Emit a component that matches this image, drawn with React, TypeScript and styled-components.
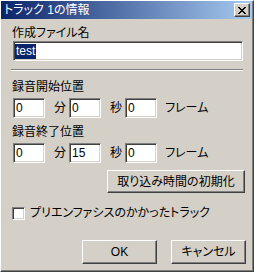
import styled, { createGlobalStyle } from 'styled-components';

const GlobalStyle = createGlobalStyle`
  html, body {
    margin: 0;
    padding: 0;
    background: #d4d0c8;
  }
  body {
    font-family: 'Liberation Sans', 'Noto Sans CJK JP', sans-serif;
    font-size: 12px;
    font-feature-settings: 'palt';
    color: #000000;
  }
`;

const Window = styled.div`
  box-sizing: border-box;
  width: 254px;
  height: 272px;
  background: #d4d0c8;
  border-top: 1px solid #ffffff;
  border-left: 1px solid #ffffff;
  border-right: 1px solid #404040;
  border-bottom: 1px solid #404040;
  box-shadow: inset -1px -1px 0 #808080;
  padding: 0 1px 1px 0;
  display: flex;
  flex-direction: column;
`;

const TitleBar = styled.div`
  height: 18px;
  display: flex;
  align-items: center;
  justify-content: space-between;
  padding-left: 3px;
  background: linear-gradient(to right, #0a246a, #a6caf0);
  color: #ffffff;
  line-height: 14px;
`;

const CloseButton = styled.div`
  box-sizing: border-box;
  width: 16px;
  height: 14px;
  margin-right: 2px;
  background: #d4d0c8;
  border-top: 1px solid #ffffff;
  border-left: 1px solid #ffffff;
  border-right: 1px solid #404040;
  border-bottom: 1px solid #404040;
  box-shadow: inset -1px -1px 0 #808080;
  display: flex;
  align-items: center;
  justify-content: center;
`;

const Body = styled.div`
  flex: 1;
  display: flex;
  flex-direction: column;
  padding: 7px 6px 0 11px;
`;

const Label = styled.div<{ gap?: number }>`
  height: 14px;
  line-height: 14px;
  margin-top: ${(p) => p.gap ?? 0}px;
  white-space: nowrap;
`;

const Field = styled.div<{ w?: number }>`
  box-sizing: border-box;
  width: ${(p) => (p.w ? `${p.w}px` : 'auto')};
  height: 20px;
  background: #ffffff;
  border-top: 1px solid #808080;
  border-left: 1px solid #808080;
  border-right: 1px solid #ffffff;
  border-bottom: 1px solid #ffffff;
  box-shadow: inset 1px 1px 0 #404040, inset -1px -1px 0 #d4d0c8;
  padding: 0 2px;
  display: flex;
  align-items: center;
  line-height: 15px;
`;

const WideField = styled(Field)`
  margin: 1px 3px 0 1px;
  padding-left: 1px;
`;

const Selected = styled.span`
  background: #0a246a;
  color: #ffffff;
  padding: 0 1px;
`;

const Separator = styled.div`
  border-top: 1px solid #808080;
  border-bottom: 1px solid #ffffff;
  margin: 8px 3px 0 -1px;
`;

const TimeRow = styled.div`
  display: flex;
  align-items: center;
  margin-top: 4px;
  padding-left: 1px;
`;

const Unit = styled.span<{ tail?: boolean }>`
  margin: 0 ${(p) => (p.tail ? 0 : 3)}px 0 ${(p) => (p.tail ? 8 : 9)}px;
  line-height: 14px;
`;

const ActionRow = styled.div<{ gap: number; spacing?: number }>`
  display: flex;
  justify-content: flex-end;
  gap: ${(p) => p.spacing ?? 0}px;
  margin-top: ${(p) => p.gap}px;
`;

const Button = styled.button<{ w: number; h?: number; inset?: number }>`
  box-sizing: border-box;
  width: ${(p) => p.w}px;
  height: ${(p) => p.h ?? 23}px;
  margin-right: ${(p) => p.inset ?? 0}px;
  padding: 0;
  background: #d4d0c8;
  border-top: 1px solid #ffffff;
  border-left: 1px solid #ffffff;
  border-right: 1px solid #404040;
  border-bottom: 1px solid #404040;
  box-shadow: inset -1px -1px 0 #808080;
  font: inherit;
  font-feature-settings: 'palt';
  color: #000000;
  line-height: 14px;
`;

const CheckRow = styled.label`
  display: flex;
  align-items: center;
  gap: 5px;
  margin-top: 13px;
  line-height: 14px;
`;

const CheckBox = styled.span`
  box-sizing: border-box;
  width: 13px;
  height: 13px;
  background: #ffffff;
  border-top: 1px solid #808080;
  border-left: 1px solid #808080;
  border-right: 1px solid #ffffff;
  border-bottom: 1px solid #ffffff;
  box-shadow: inset 1px 1px 0 #404040, inset -1px -1px 0 #d4d0c8;
`;

function CloseGlyph() {
  return (
    <svg width="8" height="7" viewBox="0 0 8 7" shapeRendering="crispEdges">
      <path
        fill="#000000"
        d="M0 0h2v1H0z M6 0h2v1H6z M1 1h2v1H1z M5 1h2v1H5z M2 2h4v1H2z M3 3h2v1H3z M2 4h4v1H2z M1 5h2v1H1z M5 5h2v1H5z M0 6h2v1H0z M6 6h2v1H6z"
      />
    </svg>
  );
}

function TimeInputs({ min, sec, frame }: { min: string; sec: string; frame: string }) {
  return (
    <TimeRow>
      <Field w={32}>{min}</Field>
      <Unit>分</Unit>
      <Field w={32}>{sec}</Field>
      <Unit>秒</Unit>
      <Field w={32}>{frame}</Field>
      <Unit tail>フレーム</Unit>
    </TimeRow>
  );
}

function App() {
  return (
    <>
      <GlobalStyle />
      <Window>
        <TitleBar>
          <span>トラック 1の情報</span>
          <CloseButton>
            <CloseGlyph />
          </CloseButton>
        </TitleBar>
        <Body>
          <Label>作成ファイル名</Label>
          <WideField>
            <Selected>test</Selected>
          </WideField>
          <Separator />
          <Label gap={9}>録音開始位置</Label>
          <TimeInputs min="0" sec="0" frame="0" />
          <Label gap={7}>録音終了位置</Label>
          <TimeInputs min="0" sec="15" frame="0" />
          <ActionRow gap={7}>
            <Button w={138} inset={1}>
              取り込み時間の初期化
            </Button>
          </ActionRow>
          <CheckRow>
            <CheckBox />
            <span>プリエンファシスのかかったトラック</span>
          </CheckRow>
          <ActionRow gap={20} spacing={14}>
            <Button w={75} h={24}>
              OK
            </Button>
            <Button w={75} h={24}>
              キャンセル
            </Button>
          </ActionRow>
        </Body>
      </Window>
    </>
  );
}

export default App;
